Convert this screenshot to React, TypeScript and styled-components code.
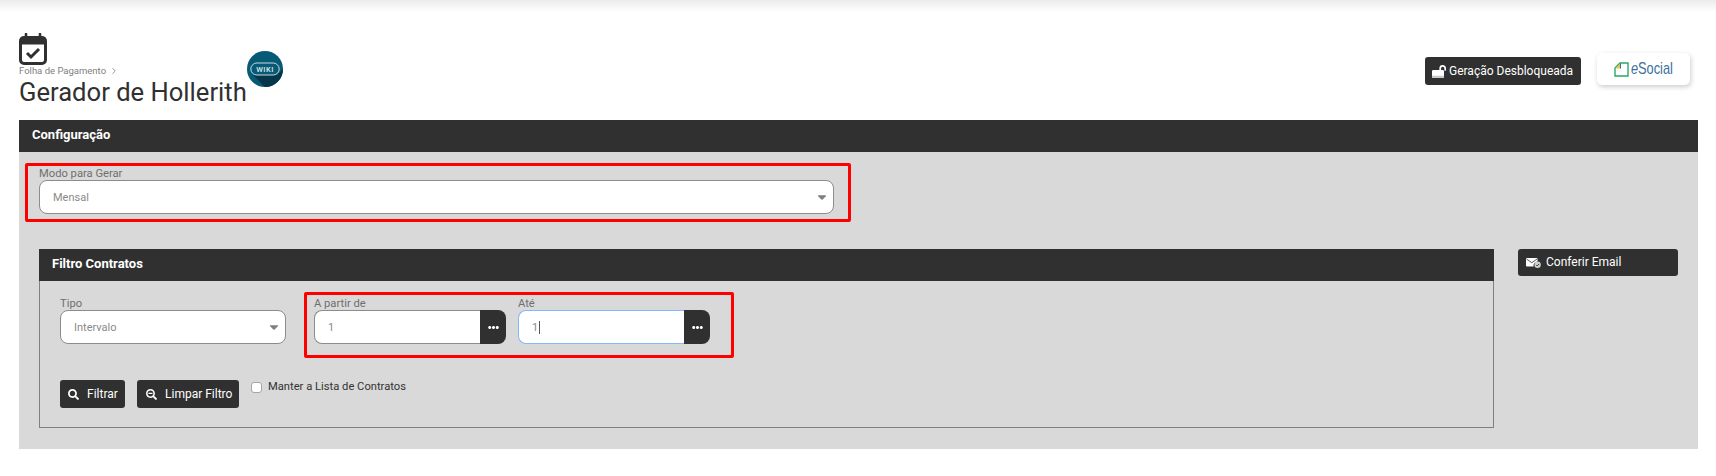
import styled, { createGlobalStyle } from 'styled-components'
import { FaSearch, FaSearchMinus, FaEllipsisH, FaCaretDown } from 'react-icons/fa'
import { ChevronRight } from 'lucide-react'

const GlobalStyle = createGlobalStyle`
  html, body {
    margin: 0;
    background: #fff;
    font-family: Roboto, "Liberation Sans", sans-serif;
    color: #333;
  }
`

const CalendarIcon = () => (
  <svg width="28" height="32" viewBox="0 0 28 32">
    <path d="M7 1v5M21 1v5" stroke="#303030" strokeWidth="2.6" strokeLinecap="round" />
    <rect x="1.5" y="4.5" width="25" height="26" rx="3.5" fill="#fff" stroke="#303030" strokeWidth="3" />
    <rect x="1.5" y="4.5" width="25" height="7" fill="#303030" />
    <path d="M8 20l4 4 8-8" fill="none" stroke="#303030" strokeWidth="3" />
  </svg>
)

const WikiBadge = () => (
  <BadgeSvg width="36" height="36" viewBox="0 0 36 36">
    <defs>
      <clipPath id="wiki-disc"><circle cx="18" cy="18" r="18" /></clipPath>
    </defs>
    <circle cx="18" cy="18" r="18" fill="#065a75" />
    <path d="M6 24h24l6-6v18H18z" fill="#06364a" clipPath="url(#wiki-disc)" />
    <rect x="3.8" y="12" width="28.4" height="12" rx="6" fill="#065a75" stroke="#dfe9ec" strokeWidth="0.9" />
    <text x="18" y="20.6" textAnchor="middle" fontSize="7.5" fontWeight="500" fontFamily="Roboto" fill="#dfe9ec" letterSpacing="0.5">WIKI</text>
  </BadgeSvg>
)

const UnlockIcon = () => (
  <svg width="15" height="13" viewBox="0 0 15 13">
    <path d="M1.3 5h9.4A1.3 1.3 0 0 1 12 6.300v5.400A1.300 1.300 0 0 1 10.700 13H1.300A1.300 1.300 0 0 1 0 11.700V6.300A1.300 1.300 0 0 1 1.300 5z" fill="#fff" />
    <path d="M0 10.800h12v.9A1.300 1.300 0 0 1 10.700 13H1.300A1.300 1.300 0 0 1 0 11.700z" fill="#c9c9c9" />
    <path d="M8.200 5.500V3.400a2.500 2.500 0 0 1 5 0V5" fill="none" stroke="#fff" strokeWidth="1.700" strokeLinecap="round" />
  </svg>
)

const SocialMark = () => (
  <svg width="15" height="15" viewBox="0 0 15 15">
    <path d="M1 14V6l5-5h8v13z" fill="#fff" stroke="#2fa56b" strokeWidth="1.400" />
    <path d="M1.500 6.500h5v-5z" fill="#f2c33a" />
    <path d="M6.500 6.500v-5" stroke="#2e6e9e" strokeWidth="1" />
  </svg>
)

const MailCheckIcon = () => (
  <svg width="15" height="10" viewBox="0 0 15 10">
    <path d="M0 1a1 1 0 0 1 1-1h9.500a1 1 0 0 1 1 1v2.600A4 4 0 0 0 7.600 8.500H1a1 1 0 0 1-1-1z" fill="#fff" />
    <path d="M.5 1L5.800 4.700 11 1" fill="none" stroke="#303030" strokeWidth="0.800" />
    <circle cx="11.600" cy="6.800" r="3.200" fill="#cfcfcf" />
    <path d="M10.100 6.900l1.100 1.100 1.900-2.100" fill="none" stroke="#303030" strokeWidth="0.900" />
  </svg>
)

export default function App() {
  return (
    <Page>
      <GlobalStyle />
      <TopShade />
      <Header>
        <Heading>
          <Titles>
            <CalendarIcon />
            <Breadcrumb>Folha de Pagamento <ChevronRight size={10} /></Breadcrumb>
            <Title>Gerador de Hollerith</Title>
          </Titles>
          <WikiBadge />
        </Heading>
        <HeaderActions>
          <DarkButton $height={28} $width={156} $gap={2} $pad={7}>
            <UnlockIcon />
            <ButtonLabel>Geração Desbloqueada</ButtonLabel>
          </DarkButton>
          <SocialCard>
            <SocialMark />
            <SocialName><i>e</i>Social</SocialName>
          </SocialCard>
        </HeaderActions>
      </Header>

      <Panel>
        <PanelBar>Configuração</PanelBar>
        <PanelBody>
          <Highlight $width={826} $height={59} $left={6} $padTop={3} $padLeft={11}>
            <Field $width={795}>
              <FieldLabel>Modo para Gerar</FieldLabel>
              <Select>
                Mensal
                <FaCaretDown size={14} />
              </Select>
            </Field>
          </Highlight>

          <Columns>
            <FilterBox>
              <PanelBar>Filtro Contratos</PanelBar>
              <FilterBody>
                <FilterRow>
                  <Field $width={226} $top={7}>
                    <FieldLabel>Tipo</FieldLabel>
                    <Select>
                      Intervalo
                      <FaCaretDown size={14} />
                    </Select>
                  </Field>
                  <Highlight $width={430} $height={66} $left={18} $padTop={4} $padLeft={7}>
                    <RangeFields>
                      <Field $width={192}>
                        <FieldLabel>A partir de</FieldLabel>
                        <InputGroup>
                          <TextInput>1</TextInput>
                          <AddOn><FaEllipsisH size={11} /></AddOn>
                        </InputGroup>
                      </Field>
                      <Field $width={192}>
                        <FieldLabel>Até</FieldLabel>
                        <InputGroup>
                          <TextInput $focused>1<Caret /></TextInput>
                          <AddOn><FaEllipsisH size={11} /></AddOn>
                        </InputGroup>
                      </Field>
                    </RangeFields>
                  </Highlight>
                </FilterRow>
                <ActionRow>
                  <DarkButton $height={28} $width={65} $gap={8} $pad={8}>
                    <FaSearch size={11} />
                    <ButtonLabel>Filtrar</ButtonLabel>
                  </DarkButton>
                  <DarkButton $height={28} $width={102} $gap={8} $pad={9}>
                    <FaSearchMinus size={11} />
                    <ButtonLabel>Limpar Filtro</ButtonLabel>
                  </DarkButton>
                  <KeepList>
                    <CheckBox />
                    <KeepText>Manter a Lista de Contratos</KeepText>
                  </KeepList>
                </ActionRow>
              </FilterBody>
            </FilterBox>
            <SideColumn>
              <DarkButton $height={27} $width={160} $gap={5} $pad={8}>
                <MailCheckIcon />
                <ButtonLabel>Conferir Email</ButtonLabel>
              </DarkButton>
            </SideColumn>
          </Columns>
        </PanelBody>
      </Panel>
    </Page>
  )
}

const Page = styled.div`
  width: 1716px;
  height: 476px;
  overflow: hidden;
`

const TopShade = styled.div`
  height: 12px;
  background: linear-gradient(#ebebeb, #fff);
`

const Header = styled.header`
  display: flex;
  justify-content: space-between;
  height: 108px;
  padding: 0 26px 0 19px;
`

const Heading = styled.div`
  display: flex;
  align-items: flex-start;
  padding-top: 21px;
`

const BadgeSvg = styled.svg`
  margin-top: 18px;
`

const Titles = styled.div`
  display: flex;
  flex-direction: column;
  align-items: flex-start;

  > svg {
    display: block;
  }
`

const Breadcrumb = styled.div`
  display: flex;
  align-items: center;
  gap: 3px;
  font-size: 9.5px;
  line-height: 12px;
  color: #808080;
`

const Title = styled.h1`
  margin: 0;
  font-size: 25.6px;
  line-height: 30px;
  font-weight: 400;
  color: #303030;
`

const HeaderActions = styled.div`
  display: flex;
  align-items: flex-start;
  gap: 16px;
  padding-top: 45px;
`

const DarkButton = styled.div<{ $height: number; $width: number; $gap: number; $pad: number }>`
  display: flex;
  align-items: center;
  box-sizing: border-box;
  height: ${p => p.$height}px;
  width: ${p => p.$width}px;
  gap: ${p => p.$gap}px;
  padding-left: ${p => p.$pad}px;
  background: #303030;
  border-radius: 3px;
  color: #fff;
  font-size: 12px;
  font-weight: 400;
  white-space: nowrap;
  flex-shrink: 0;

  svg {
    flex-shrink: 0;
  }
`

const ButtonLabel = styled.span`
  margin-top: -1px;
`

const SocialCard = styled.div`
  display: flex;
  align-items: center;
  gap: 2px;
  box-sizing: border-box;
  width: 93px;
  height: 32px;
  margin-top: -4px;
  padding-left: 17px;
  background: #fff;
  border-radius: 5px;
  box-shadow: 1px 2px 5px rgba(0, 0, 0, 0.2);
`

const SocialName = styled.span`
  display: inline-block;
  width: 43px;
  font-family: "Liberation Sans", sans-serif;
  font-size: 17px;
  color: #3a6f9c;
  white-space: nowrap;
  transform: scaleX(0.75);
  transform-origin: left center;
`

const Panel = styled.section`
  width: 1679px;
  height: 329px;
  margin-left: 19px;
  background: #d9d9d9;
`

const PanelBar = styled.div`
  display: flex;
  align-items: center;
  box-sizing: border-box;
  height: 32px;
  padding: 0 0 3px 13px;
  background: #303030;
  color: #fff;
  font-size: 13px;
  font-weight: 700;
`

const PanelBody = styled.div`
  padding-top: 11px;
`

const Highlight = styled.div<{ $width: number; $height: number; $left: number; $padTop: number; $padLeft: number }>`
  box-sizing: border-box;
  width: ${p => p.$width}px;
  height: ${p => p.$height}px;
  margin-left: ${p => p.$left}px;
  padding: ${p => p.$padTop}px 0 0 ${p => p.$padLeft}px;
  border: 3px solid #ff0000;
  border-radius: 2px;
  flex-shrink: 0;
`

const Field = styled.div<{ $width: number; $top?: number }>`
  width: ${p => p.$width}px;
  margin-top: ${p => p.$top ?? 0}px;
  flex-shrink: 0;
`

const FieldLabel = styled.div`
  font-size: 11.2px;
  line-height: 9px;
  margin-bottom: 2px;
  color: #6f6f6f;
`

const Select = styled.div`
  display: flex;
  align-items: center;
  justify-content: space-between;
  box-sizing: border-box;
  height: 34px;
  padding: 0 4px 0 13px;
  background: #fff;
  border: 1px solid #8c8c8c;
  border-radius: 8px;
  font-size: 11px;
  color: #8a8a8a;

  svg {
    color: #808080;
  }
`

const Columns = styled.div`
  display: flex;
  gap: 24px;
  margin-top: 27px;
  padding-left: 20px;
`

const FilterBox = styled.div`
  width: 1455px;
`

const FilterBody = styled.div`
  box-sizing: border-box;
  height: 147px;
  padding: 11px 20px 0;
  border: 1px solid #808080;
  border-top: 0;
`

const FilterRow = styled.div`
  display: flex;
  align-items: flex-start;
`

const RangeFields = styled.div`
  display: flex;
  gap: 12px;
`

const InputGroup = styled.div`
  display: flex;
  height: 34px;
`

const TextInput = styled.div<{ $focused?: boolean }>`
  display: flex;
  align-items: center;
  flex: 1;
  box-sizing: border-box;
  padding-left: 13px;
  background: #fff;
  border: 1px solid ${p => (p.$focused ? '#86b7fe' : '#8c8c8c')};
  border-right: 0;
  border-radius: 8px 0 0 8px;
  font-size: 11px;
  color: #8a8a8a;
`

const Caret = styled.span`
  width: 1px;
  height: 13px;
  margin-left: 1px;
  background: #555;
`

const AddOn = styled.div`
  display: flex;
  align-items: center;
  justify-content: center;
  width: 26px;
  background: #303030;
  border-radius: 0 8px 8px 0;
  color: #fff;
`

const ActionRow = styled.div`
  display: flex;
  align-items: flex-start;
  gap: 12px;
  margin-top: 22px;
`

const KeepList = styled.label`
  display: flex;
  align-items: center;
  gap: 6px;
  margin-top: 2px;
  font-size: 11.2px;
  font-weight: 400;
  color: #333;
`

const KeepText = styled.span`
  margin-top: -2px;
`

const CheckBox = styled.span`
  box-sizing: border-box;
  width: 11px;
  height: 11px;
  background: #fff;
  border: 1px solid #a5a5a5;
  border-radius: 3px;
`

const SideColumn = styled.div`
  flex-shrink: 0;
`
